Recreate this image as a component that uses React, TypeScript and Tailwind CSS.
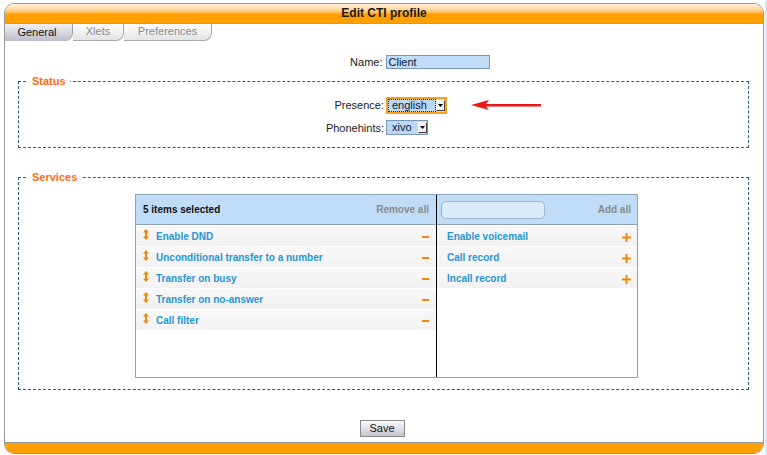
import React from 'react';

const selected = [
  'Enable DND',
  'Unconditional transfer to a number',
  'Transfer on busy',
  'Transfer on no-answer',
  'Call filter',
];

const available = ['Enable voicemail', 'Call record', 'Incall record'];

function MoveIcon() {
  return (
    <svg width="6" height="11" viewBox="0 0 6 11" className="shrink-0 -mt-[3px]">
      <path d="M3 0 L6 3.5 H0 Z" fill="#e8890c" />
      <rect x="2" y="3" width="2" height="5" fill="#e8890c" />
      <path d="M3 11 L6 7.5 H0 Z" fill="#e8890c" />
    </svg>
  );
}

function Minus() {
  return <span className="block w-[7px] h-[2px] bg-[#ee8a10] mt-[2px]" />;
}

function Plus() {
  return (
    <svg width="9" height="9" viewBox="0 0 9 9" className="shrink-0 mt-[2px]">
      <rect x="0" y="3.5" width="9" height="2" fill="#ee8a10" />
      <rect x="3.5" y="0" width="2" height="9" fill="#ee8a10" />
    </svg>
  );
}

function DropButton() {
  return (
    <span className="flex items-center justify-center w-[9px] h-[11px] bg-[#f0f0f0] border-r border-b border-[#404040] border-t border-l border-t-white border-l-white">
      <svg width="5" height="3" viewBox="0 0 5 3">
        <path d="M0 0 H5 L2.5 3 Z" fill="#000" />
      </svg>
    </span>
  );
}

function Tab({ label, active }: { label: string; active?: boolean }) {
  return (
    <div
      className={
        active
          ? 'w-[68px] h-[17px] flex items-center justify-center pr-[3px] pb-[1px] text-[11px] text-[#111] bg-[linear-gradient(to_bottom,#f2f2f4,#bcbccb)] border-r border-[#a0a0a8] rounded-br-[8px]'
          : 'h-[17px] flex items-center justify-center pb-[1px] text-[11px] text-[#8a8a8a] bg-[linear-gradient(to_bottom,#ffffff,#e4e4e4)] border-r border-b border-[#a8a8a8] rounded-br-[8px]'
      }
    >
      {label}
    </div>
  );
}

export default function App() {
  return (
    <div className="w-[767px] h-[455px] bg-white flex font-['Liberation_Sans',Arial,sans-serif] overflow-hidden">
      <div className="pt-[3px] pl-[4px]">
        <div className="w-[760px] h-[451px] border border-[#9a9a9a] rounded-[10px] overflow-hidden flex flex-col">
          {/* header */}
          <div className="h-[20px] shrink-0 border-b border-[#a0a0a0] bg-[linear-gradient(to_bottom,#fff1dc_0%,#ffd899_30%,#ffb54a_48%,#ff9f00_52%,#ff9f00_100%)] flex items-center justify-center">
            <span className="text-[12px] font-bold text-[#1a1a1a] leading-none pb-[1px]">Edit CTI profile</span>
          </div>

          {/* tabs */}
          <div className="flex">
            <Tab label="General" active />
            <div className="w-[51px]">
              <Tab label="Xlets" />
            </div>
            <div className="w-[88px]">
              <Tab label="Preferences" />
            </div>
          </div>

          {/* name */}
          <div className="mt-[13px] grid grid-cols-2 gap-x-[3px] items-center text-[11px] text-[#1a1a1a]">
            <span className="text-right">Name:</span>
            <div className="w-[104px] h-[14px] bg-[#c0dcf7] border border-[#7c98b6] text-[#0a1a3a] flex items-center pl-[2px] leading-none">
              Client
            </div>
          </div>

          {/* status */}
          <fieldset className="mt-[4px] ml-[13px] mr-[14px] border border-dashed border-[#23647a] pt-[9px] pb-[11px]">
            <legend className="ml-[9px] px-[4px] text-[11px] leading-[13px] font-bold text-[#ff6c10]">Status</legend>
            <div className="grid grid-cols-[365px_1fr] gap-x-[2px] gap-y-[6px] items-center text-[11px] text-[#1a1a1a]">
              <span className="text-right">Presence:</span>
              <div className="flex items-center">
                <div className="w-[61px] h-[17px] border-2 border-[#f8a01c] bg-[#bcd8f5] flex items-center">
                  <span className="flex-1 h-[13px] border border-dotted border-[#222] flex items-center pl-[3px] leading-none text-[#0a1a3a]">
                    english
                  </span>
                  <DropButton />
                </div>
                <svg width="72" height="12" viewBox="0 0 72 12" className="ml-[24px]">
                  <path d="M0 6 L18 1 L15 5 L70 5 L70 7.5 L15 7.5 L18 11 Z" fill="#ee1515" />
                </svg>
              </div>
              <span className="text-right">Phonehints:</span>
              <div className="w-[42px] h-[15px] border border-[#7c98b6] bg-[#bcd8f5] flex items-center pl-[5px] leading-none text-[#0a1a3a]">
                <span className="flex-1">xivo</span>
                <DropButton />
              </div>
            </div>
          </fieldset>

          {/* services */}
          <fieldset className="mt-[23px] ml-[13px] mr-[14px] border border-dashed border-[#23647a] pt-[10px] pb-[11px]">
            <legend className="ml-[9px] px-[4px] text-[11px] leading-[13px] font-bold text-[#ff6c10]">Services</legend>
            <div className="ml-[116px] w-[503px] h-[184px] border border-[#8ea2b8] flex text-[10px] font-bold">
              <div className="w-[301px] border-r border-black flex flex-col">
                <div className="h-[30px] shrink-0 bg-[#c0dcf7] border-b border-[#8ea2b8] flex items-center justify-between pl-[7px] pr-[7px]">
                  <span className="text-[#111]">5 items selected</span>
                  <span className="text-[#8a8a8a]">Remove all</span>
                </div>
                <div className="pt-px">
                  {selected.map((s) => (
                    <div key={s} className="h-[20px] mb-px bg-[linear-gradient(to_bottom,#f8f8f8,#f2f2f2)] flex items-center pl-[7px] pr-[7px]">
                      <MoveIcon />
                      <span className="ml-[7px] flex-1 text-[#2696d3]">{s}</span>
                      <Minus />
                    </div>
                  ))}
                </div>
              </div>
              <div className="flex-1 flex flex-col">
                <div className="h-[30px] shrink-0 bg-[#c0dcf7] border-b border-[#8ea2b8] flex items-center justify-between pl-[4px] pr-[6px]">
                  <div className="w-[104px] h-[18px] rounded-[5px] bg-[#dcebfa] border border-[#9db3cc]" />
                  <span className="text-[#8a8a8a]">Add all</span>
                </div>
                <div className="pt-px">
                  {available.map((s) => (
                    <div key={s} className="h-[20px] mb-px bg-[linear-gradient(to_bottom,#f8f8f8,#f2f2f2)] flex items-center pl-[10px] pr-[6px]">
                      <span className="flex-1 text-[#2696d3]">{s}</span>
                      <Plus />
                    </div>
                  ))}
                </div>
              </div>
            </div>
          </fieldset>

          {/* save */}
          <div className="mt-[30px] flex justify-center pr-[4px]">
            <button className="w-[45px] h-[17px] border border-[#8a8a8a] bg-[linear-gradient(to_bottom,#fbfbfd,#c6c6d4)] text-[11px] text-[#111] leading-none flex items-center justify-center">
              Save
            </button>
          </div>

          {/* footer */}
          <div className="mt-auto h-[11px] shrink-0 bg-[#ff9f00] border-t border-[#9a9a9a]" />
        </div>
      </div>
      <div className="flex-1 ml-[1px] bg-[#d6e8f8]" />
    </div>
  );
}
